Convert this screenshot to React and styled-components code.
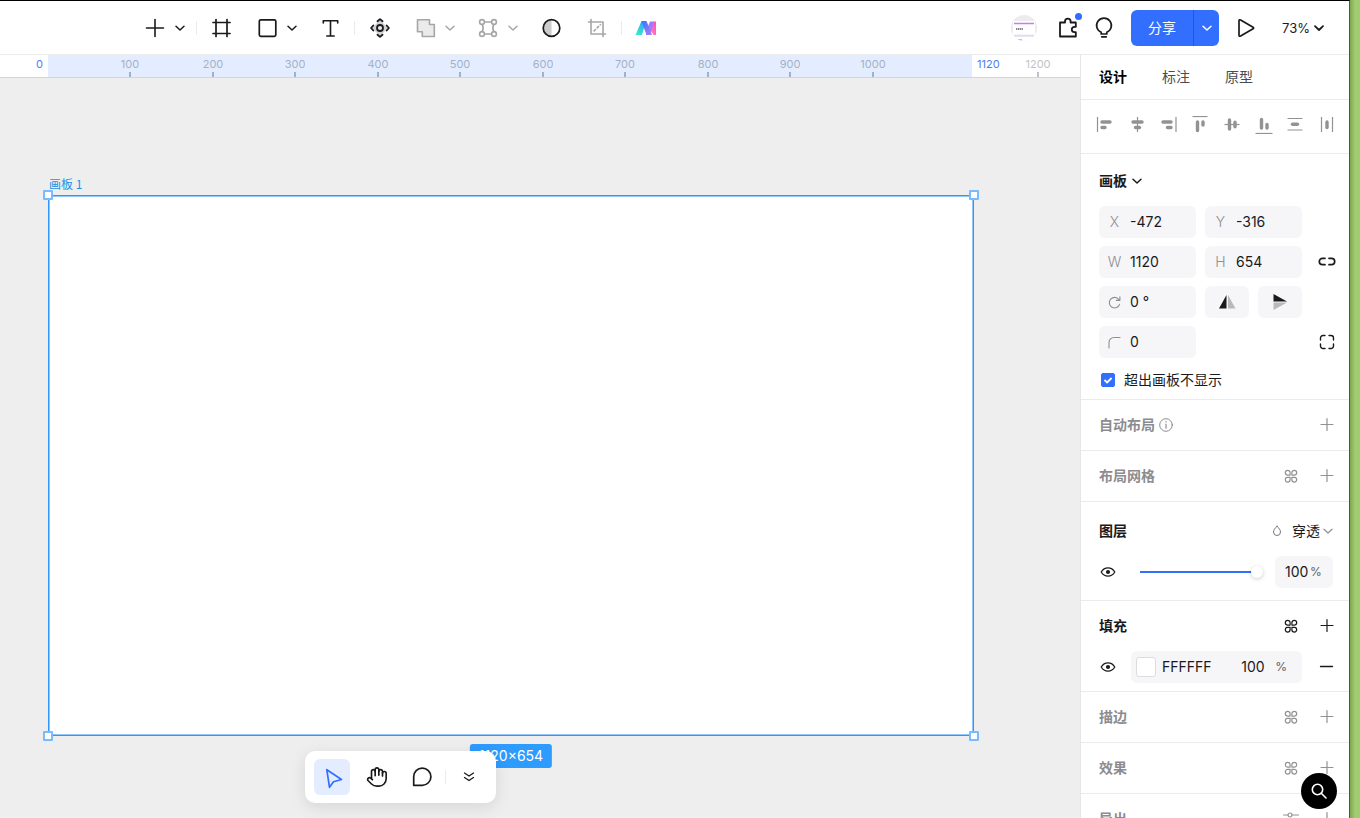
import React, { useState } from 'react';
import styled, { createGlobalStyle } from 'styled-components';
import { Hand } from 'lucide-react';

const GlobalStyle = createGlobalStyle`
  * {
    box-sizing: border-box;
  }
  body {
    margin: 0;
    color: #1a1a1c;
    font: 14px/20px Inter, 'Noto Sans CJK SC', sans-serif;
  }
  button, input, select {
    margin: 0;
    padding: 0;
    border: 0;
    background: none;
    color: inherit;
    font: inherit;
    outline: none;
  }
  svg {
    display: block;
    flex: none;
  }
`;

const Desktop = styled.div`
  display: flex;
  height: 100vh;
  overflow: hidden;
  background: linear-gradient(90deg, #7fa553, #a2cc70 5px, #a2cc70) right / 10px 100% no-repeat;
  padding-right: 10px;
`;

const AppWindow = styled.div`
  position: relative;
  flex: 1;
  min-width: 0;
  display: flex;
  flex-direction: column;
  overflow: hidden;
  background: #fff;
  border-top: 1px solid #000;
  border-right: 1px solid #4d5a3e;
`;

/* 顶部工具栏 */
const Header = styled.header`
  display: flex;
  align-items: center;
  justify-content: space-between;
  height: 54px;
  flex: none;
  padding: 0 24px 0 132px;
  border-bottom: 1px solid #ebebeb;
`;

const Tools = styled.div`
  display: flex;
  align-items: center;
`;

const Tool = styled.button`
  display: flex;
  width: 24px;
  height: 24px;
  margin: 0 11px;
  color: ${(p) => (p.$muted ? '#a6a6a8' : '#1a1a1c')};
`;

const Caret = styled.button`
  display: flex;
  align-items: center;
  justify-content: center;
  width: 16px;
  height: 24px;
  margin: 0 7px 0 -6px;
  color: ${(p) => (p.$muted ? '#a6a6a8' : '#1a1a1c')};
`;

const Divider = styled.span`
  width: 1px;
  height: 14px;
  margin: 0 ${(p) => p.$space || 1}px;
  background: #ebebeb;
`;

const Actions = styled.div`
  display: flex;
  align-items: center;
  gap: ${(p) => p.$gap}px;
`;

const Avatar = styled.span`
  width: 26px;
  height: 26px;
  margin-right: 7px;
  border-radius: 50%;
  overflow: hidden;
`;

const IconButton = styled.button`
  position: relative;
  display: flex;
  align-items: center;
  justify-content: center;
  flex: none;
  width: ${(p) => p.$size || 24}px;
  height: ${(p) => p.$size || 24}px;
  color: ${(p) => (p.$muted ? '#929295' : '#1a1a1c')};
`;

const Dot = styled.i`
  position: absolute;
  top: -3px;
  right: -2px;
  width: 7px;
  height: 7px;
  border-radius: 50%;
  background: #2f6dff;
`;

const ShareGroup = styled.div`
  display: flex;
  height: 36px;
  border-radius: 6px;
  overflow: hidden;
  background: #326fff;
  color: #fff;
  .share {
    width: 63px;
    border-right: 1px solid #1f57e0;
  }
  .more {
    display: flex;
    align-items: center;
    justify-content: center;
    width: 25px;
  }
`;

const ZoomButton = styled.button`
  display: flex;
  align-items: center;
  gap: 3px;
  padding-left: 9px;
  font-size: 13px;
`;

const Body = styled.div`
  flex: 1;
  display: flex;
  min-height: 0;
`;

const Workspace = styled.main`
  flex: 1;
  min-width: 0;
  display: flex;
  flex-direction: column;
`;

/* 标尺 */
const Ruler = styled.div`
  position: relative;
  height: 23px;
  flex: none;
  overflow: hidden;
  border-bottom: 1px solid #d3d5d8;
  font-size: 11px;
  line-height: 18px;
  .range {
    position: absolute;
    top: 0;
    height: 23px;
    background: #e3edff;
  }
`;

const Mark = styled.span`
  position: absolute;
  top: 0;
  width: 40px;
  height: 22px;
  margin-left: -20px;
  text-align: center;
  color: ${(p) => (p.$outside ? '#c2c2c4' : '#a3b1c6')};
  &::after {
    content: '';
    position: absolute;
    left: 19px;
    bottom: 0;
    width: 2px;
    height: 5px;
    background: currentColor;
  }
`;

const Edge = styled.span`
  position: absolute;
  top: 0;
  color: #4d7df5;
  transform: ${(p) => (p.$before ? 'translateX(-100%)' : 'none')};
  padding: 0 5px;
`;

/* 画布 */
const Canvas = styled.div`
  position: relative;
  flex: 1;
  overflow: hidden;
  background: #eee;
`;

const Artboard = styled.div`
  position: absolute;
  background: #fff;
  border: 1px solid #2f97fb;
  box-shadow: inset 0 0 0 1px #8fc7fd;
  .name {
    position: absolute;
    left: 0;
    bottom: calc(100% + 2px);
    font: 12px/20px 'Noto Sans CJK SC', sans-serif;
    color: #1a93e6;
    white-space: nowrap;
  }
`;

const Handle = styled.i`
  position: absolute;
  width: 10px;
  height: 10px;
  background: #fff;
  border: 2px solid #79bbfc;
  border-radius: 1px;
  ${(p) => p.$v}: -6px;
  ${(p) => p.$h}: -6px;
`;

const SizeTag = styled.span`
  position: absolute;
  top: calc(100% + 9px);
  left: 50%;
  transform: translateX(-50%);
  padding: 0 9px;
  border-radius: 3px;
  background: #2e9bff;
  color: #fff;
  line-height: 24px;
`;

const Dock = styled.div`
  position: absolute;
  left: 305px;
  bottom: 15px;
  display: flex;
  align-items: center;
  height: 52px;
  padding: 0 9px;
  border-radius: 10px;
  background: #fff;
  box-shadow: 0 4px 16px rgba(0, 0, 0, 0.1);
`;

const DockGroup = styled.div`
  display: flex;
  gap: 9px;
`;

const DockButton = styled.button`
  display: flex;
  align-items: center;
  justify-content: center;
  width: 36px;
  height: 36px;
  border-radius: 6px;
  background: ${(p) => (p.$active ? '#e3edff' : 'transparent')};
  color: ${(p) => (p.$active ? '#326fff' : '#1a1a1c')};
`;

/* 水印 */
const Watermark = styled.div`
  position: absolute;
  inset: 0;
  overflow: hidden;
  pointer-events: none;
  color: rgba(0, 0, 0, 0.016);
  font: 29px/34px 'Liberation Serif', 'Noto Sans CJK SC', serif;
  text-align: center;
  div {
    position: absolute;
    width: 240px;
    margin: -68px 0 0 -120px;
    transform: rotate(-45deg);
  }
`;

/* 右侧属性面板 */
const Panel = styled.aside`
  width: 269px;
  flex: none;
  overflow: hidden;
  border-left: 1px solid #e6e6e6;
`;

const Tabs = styled.nav`
  display: flex;
  align-items: center;
  gap: 35px;
  height: 45px;
  padding: 0 18px;
  border-bottom: 1px solid #ebebeb;
`;

const Tab = styled.button`
  color: ${(p) => (p.$active ? '#000' : '#4c4c50')};
  font-weight: ${(p) => (p.$active ? 700 : 400)};
`;

const AlignBar = styled.div`
  display: flex;
  align-items: center;
  justify-content: space-between;
  height: 54px;
  padding: 0 13px 3px 15px;
  border-bottom: 1px solid #ebebeb;
`;

const Section = styled.section`
  display: flex;
  flex-direction: column;
  gap: 12px;
  padding: ${(p) => p.$top || 12}px 13px ${(p) => p.$bottom || 12}px 18px;
  border-bottom: 1px solid #ebebeb;
`;

const SectionHead = styled.div`
  display: flex;
  align-items: center;
  gap: 18px;
  height: 26px;
  color: ${(p) => (p.$muted ? '#8c8c90' : '#1a1a1c')};
  h2 {
    display: flex;
    align-items: center;
    gap: 4px;
    flex: 1;
    margin: 0;
    font-size: 14px;
    font-weight: 700;
  }
`;

const Fields = styled.div`
  display: grid;
  grid-template-columns: 1fr 1fr 25px;
  gap: 8px 9px;
  align-items: center;
  .start {
    grid-column: 1;
  }
  .end {
    grid-column: 3;
    justify-self: end;
  }
`;

const Field = styled.label`
  display: flex;
  align-items: center;
  height: 32px;
  padding-left: 8px;
  border-radius: 6px;
  background: #f6f6f8;
  .tag {
    flex: none;
    width: 15px;
    margin-right: 8px;
    color: #8f8f93;
    font-weight: 300;
    text-align: center;
  }
  input {
    width: 100%;
    min-width: 0;
  }
`;

const FlipPair = styled.div`
  display: grid;
  grid-template-columns: 1fr 1fr;
  gap: 9px;
`;

const FlipButton = styled.button`
  display: flex;
  align-items: center;
  justify-content: center;
  height: 32px;
  border-radius: 6px;
  background: #f6f6f8;
`;

const CheckRow = styled.label`
  display: flex;
  align-items: center;
  gap: 9px;
  padding-left: 2px;
  input {
    appearance: none;
    width: 14px;
    height: 14px;
    border-radius: 2px;
    background: #fff;
    border: 1px solid #326fff;
  }
  input:checked {
    background: #326fff url("data:image/svg+xml,%3Csvg xmlns='http://www.w3.org/2000/svg' viewBox='0 0 12 12'%3E%3Cpath d='M2.5 6l2.6 2.5L9.6 4' fill='none' stroke='white' stroke-width='1.8'/%3E%3C/svg%3E");
  }
`;

const BlendSelect = styled.label`
  display: flex;
  align-items: center;
  select {
    appearance: none;
    width: 30px;
    margin-left: 9px;
  }
  .arrow {
    color: #929295;
    margin-right: 2px;
  }
`;

const Row = styled.div`
  display: flex;
  align-items: center;
  height: 32px;
`;

const Opacity = styled.input`
  appearance: none;
  flex: 1;
  min-width: 0;
  height: 12px;
  margin: 0 12px 0 23px;
  background: linear-gradient(#326fff, #326fff) left / calc(100% - 6px) 2px no-repeat;
  &::-webkit-slider-thumb {
    appearance: none;
    width: 12px;
    height: 12px;
    border-radius: 50%;
    background: #fff;
    box-shadow: 0 1px 4px rgba(0, 0, 0, 0.2);
  }
`;

const Percent = styled.label`
  display: flex;
  align-items: center;
  width: 58px;
  height: 32px;
  margin-right: 3px;
  padding-left: 10px;
  border-radius: 6px;
  background: #f6f6f8;
  input {
    width: 25px;
  }
  span {
    color: #5f5f63;
    font-size: 12px;
  }
`;

const FillBox = styled.div`
  flex: 1;
  display: flex;
  align-items: center;
  min-width: 0;
  height: 32px;
  margin: 0 16px 0 14px;
  padding: 0 15px 0 5px;
  border-radius: 6px;
  background: #f6f6f8;
  .swatch {
    width: 20px;
    height: 20px;
    margin-right: 6px;
    border: 1px solid #dcdce0;
    border-radius: 3px;
    background: #fff;
  }
  .hex {
    flex: 1;
    min-width: 0;
  }
  .alpha {
    width: 34px;
  }
  span {
    color: #5f5f63;
    font-size: 12px;
  }
`;

const SearchBubble = styled.button`
  position: fixed;
  right: 23px;
  bottom: 9px;
  display: flex;
  align-items: center;
  justify-content: center;
  width: 36px;
  height: 36px;
  border-radius: 50%;
  background: #000;
  color: #fff;
`;

const Svg = ({ size = 24, stroke = 1.6, children, ...rest }) => (
  <svg
    width={size}
    height={size}
    viewBox={`0 0 ${size} ${size}`}
    fill="none"
    stroke="currentColor"
    strokeWidth={stroke}
    strokeLinecap="round"
    strokeLinejoin="round"
    aria-hidden="true"
    {...rest}
  >
    {children}
  </svg>
);

const Chevron = (props) => (
  <Svg size={12} stroke={1.5} {...props}>
    <path d="M2 4.2l4 3.8 4-3.8" />
  </Svg>
);

const Plus = () => (
  <Svg size={18} stroke={1.2}>
    <path d="M3 8.5h12M9 2.5v12" />
  </Svg>
);

const Minus = () => (
  <Svg size={18} stroke={1.3}>
    <path d="M2.5 8.5h12" />
  </Svg>
);

const Clover = () => (
  <Svg size={18} stroke={1.2}>
    <path d="M8.1 8.1H5.4a2.4 2.4 0 1 1 2.7-2.6zM9.9 8.1V5.5a2.4 2.4 0 1 1 2.7 2.6zM8.1 10.3H5.4a2.4 2.4 0 1 0 2.7 2.6zM9.9 10.3v2.6a2.4 2.4 0 1 0 2.7-2.6z" />
  </Svg>
);

const Eye = () => (
  <Svg size={18} stroke={1.3}>
    <path d="M2.2 9C3.8 6.3 6.2 4.900 9 4.900S14.2 6.3 15.8 9C14.2 11.7 11.8 13.1 9 13.1S3.800 11.7 2.2 9z" />
    <circle cx="9" cy="9" r="2.1" fill="currentColor" stroke="none" />
  </Svg>
);

const Sliders = () => (
  <Svg size={18} stroke={1.2}>
    <path d="M1.5 5h4.5M10 5h6.5M1.5 13h7M13 13h3.5" />
    <circle cx="8" cy="5" r="2" />
    <circle cx="11" cy="13" r="2" />
  </Svg>
);

/* 线段 + 圆头块组成的对齐图标 */
const ALIGN_ICONS = [
  { name: '左对齐', line: 'M1.5 1v15', bars: 'M6 6h8M6 11.5h3' },
  { name: '水平居中', line: 'M9.5 1v15', bars: 'M5 6h9M7.5 11.5h4' },
  { name: '右对齐', line: 'M17 1v15', bars: 'M4 6h8M8.5 11.5h3.5' },
  { name: '顶对齐', line: 'M1.5 .5h15', bars: 'M6.5 6v8.5M12 6v3' },
  { name: '垂直居中', line: 'M1.5 8.5h15', bars: 'M6.5 4v9M12 6.2v4.500' },
  { name: '底对齐', line: 'M.5 17.5h17', bars: 'M6.5 3.5v8.5M12 8.5v3.5' },
  { name: '垂直分布', line: 'M1.5 2.500h15M1.500 14h15', bars: 'M6.500 8.300h5' },
  { name: '水平分布', line: 'M3.5 1v15M14.5 1v15', bars: 'M9 6v5.5' },
];

const SCALE = 0.825;
const board = { x: 48, y: 117, width: 1120, height: 654 };
const marks = [100, 200, 300, 400, 500, 600, 700, 800, 900, 1000];

/* 交错排列的水印坐标 */
const watermarks = [0, 1, 2, 3].flatMap((row) =>
  [0, 1, 2].map((col) => [col * 532 + (row % 2 ? 38 : 303), 48 + row * 266])
);

const TopTools = () => (
  <Tools>
    <Tool aria-label="添加"><Svg><path d="M3.5 12h17M12 3.5v17" /></Svg></Tool>
    <Caret aria-label="更多添加"><Chevron /></Caret>
    <Divider />
    <Tool aria-label="画板">
      <Svg stroke={1.7}><path d="M7 3.5v17M18 3.5v17M4 6.5h17M4 17.5h17" /></Svg>
    </Tool>
    <Tool aria-label="矩形"><Svg stroke={1.7}><rect x="4.300" y="3.800" width="16.500" height="16.500" rx="1.500" /></Svg></Tool>
    <Caret aria-label="更多形状"><Chevron /></Caret>
    <Tool aria-label="文本">
      <Svg><path d="M5.300 7V4.800h14.400V7M12.500 4.800v15.200M8.800 20h7.400" /></Svg>
    </Tool>
    <Divider />
    <Tool aria-label="组件">
      <Svg stroke={1.8}>
        <path d="M13 4l8 8-8 8-8-8z" fill="#d2d2d4" stroke="none" />
        <circle cx="13" cy="12" r="3" fill="#e8e8ea" />
        <path d="M10.500 5.300l2.500-2.200 2.500 2.200M10.500 18.700l2.500 2.200 2.500-2.200M6.300 9.500l-2.200 2.500 2.200 2.500M19.700 9.500l2.200 2.500-2.200 2.500" />
      </Svg>
    </Tool>
    <Tool aria-label="布尔运算" $muted>
      <Svg><path d="M4.500 3.700h12v4.800h4.800v12h-12v-4.800H4.500z" fill="#ebebec" /></Svg>
    </Tool>
    <Caret aria-label="更多运算" $muted><Chevron /></Caret>
    <Tool aria-label="编辑节点" $muted>
      <Svg>
        <path d="M8.500 6h7M8.500 18h7M6.200 8.500c1.300 2.300 1.300 4.700 0 7M17.800 8.500c-1.300 2.300-1.300 4.700 0 7" />
        <circle cx="6" cy="6" r="2.400" />
        <circle cx="18" cy="6" r="2.400" />
        <circle cx="6" cy="18" r="2.400" />
        <circle cx="18" cy="18" r="2.400" />
      </Svg>
    </Tool>
    <Caret aria-label="更多节点" $muted><Chevron /></Caret>
    <Tool aria-label="蒙版">
      <Svg stroke={1.7}>
        <path d="M12.500 3.800a8.200 8.200 0 0 0 0 16.400z" fill="#ccc" stroke="none" />
        <circle cx="12.500" cy="12" r="8.300" />
      </Svg>
    </Tool>
    <Tool aria-label="裁剪" $muted>
      <Svg>
        <path d="M6 3.500V18h14.500M3.500 6H18v14.500" />
        <path d="M9 15l6.500-6.500" strokeDasharray="2 2.500" />
      </Svg>
    </Tool>
    <Divider />
    <Tool aria-label="AI">
      <svg width="24" height="24" viewBox="0 0 24 24" aria-hidden="true">
        <defs>
          <linearGradient id="leg" x1="0" y1="1" x2=".6" y2="0">
            <stop offset="0" stopColor="#36f5c4" />
            <stop offset="1" stopColor="#2ea6f7" />
          </linearGradient>
          <linearGradient id="mid" x1="0" y1="0" x2="1" y2="1">
            <stop offset="0" stopColor="#2b7bf5" />
            <stop offset="1" stopColor="#b37bff" />
          </linearGradient>
          <linearGradient id="tail" x1="0" y1="1" x2="1" y2="0">
            <stop offset="0" stopColor="#ff8ad0" />
            <stop offset="1" stopColor="#ff4fa8" />
          </linearGradient>
        </defs>
        <path d="M22 5.500v13.500h-2.500l-4-6.500 4-7z" fill="url(#tail)" />
        <path d="M7.500 5h4.500L8 19H1.500z" fill="url(#leg)" />
        <path d="M12 15l4-9.500h4L16.500 19H12z" fill="#a47bff" />
        <path d="M7.500 5h5L18 19h-5.500z" fill="url(#mid)" />
      </svg>
    </Tool>
  </Tools>
);

const TopActions = () => (
  <Actions $gap={15}>
    <Actions $gap={12}>
      <Avatar>
        <svg width="26" height="26" viewBox="0 0 26 26" aria-hidden="true">
          <rect width="26" height="26" fill="#ececee" />
          <rect x="2" y="6" width="22" height="15" fill="#fff" />
          <path d="M3 8.500h20" stroke="#cf7ce8" strokeWidth="1.300" />
          <path d="M5 14h7" stroke="#66666a" strokeWidth="1.600" strokeDasharray="1.500 .500" />
          <path d="M3 20.500h20" stroke="#ecd2f5" strokeWidth="1.500" />
          <rect y="22" width="26" height="4" fill="#fff" />
          <path d="M7 25h4" stroke="#8b8b90" />
        </svg>
      </Avatar>
      <IconButton aria-label="插件">
        <Svg stroke={1.8}>
          <path d="M4 6.500h5v-1a2.800 2.800 0 0 1 5.600 0v1h5.200v4.300h-1.300a2.700 2.700 0 0 0 0 5.400h1.300v4.300H4z" />
        </Svg>
        <Dot />
      </IconButton>
      <IconButton aria-label="帮助">
        <Svg stroke={1.7}>
          <path d="M9.200 18v-1.700a7.400 7.400 0 1 1 5.600 0V18zM9.700 20.800h4.600" />
        </Svg>
      </IconButton>
    </Actions>
    <ShareGroup>
      <button className="share">分享</button>
      <button className="more" aria-label="分享选项"><Chevron /></button>
    </ShareGroup>
    <IconButton aria-label="播放">
      <Svg stroke={1.7}><path d="M5 4.800c0-.900.800-1.300 1.600-.900l12.500 7.300c.700.400.700 1.200 0 1.600L6.600 20.100c-.800.400-1.600 0-1.600-.900z" /></Svg>
    </IconButton>
    <ZoomButton>73%<Chevron stroke={1.8} /></ZoomButton>
  </Actions>
);

const DesignPanel = () => {
  const [clip, setClip] = useState(true);
  const [opacity, setOpacity] = useState(100);

  return (
    <Panel>
      <Tabs>
        <Tab $active>设计</Tab>
        <Tab>标注</Tab>
        <Tab>原型</Tab>
      </Tabs>
      <AlignBar>
        {ALIGN_ICONS.map((icon) => (
          <IconButton key={icon.name} aria-label={icon.name} $size={18} $muted>
            <Svg size={18} stroke={1.2}>
              <path d={icon.line} strokeLinecap="butt" />
              <path d={icon.bars} strokeWidth="3.400" />
            </Svg>
          </IconButton>
        ))}
      </AlignBar>
      <Section $top={14} $bottom={9}>
        <SectionHead>
          <h2>画板<Chevron /></h2>
        </SectionHead>
        <Fields>
          <Field className="start"><span className="tag">X</span><input defaultValue="-472" /></Field>
          <Field><span className="tag">Y</span><input defaultValue="-316" /></Field>
          <Field className="start"><span className="tag">W</span><input defaultValue="1120" /></Field>
          <Field><span className="tag">H</span><input defaultValue="654" /></Field>
          <IconButton className="end" $size={18} aria-label="锁定比例">
            <Svg size={18} stroke={1.7}>
              <path d="M7 5.300H4.500a3.200 3.200 0 0 0 0 6.400H7M11 5.300h2.500a3.200 3.200 0 0 1 0 6.400H11" />
            </Svg>
          </IconButton>
          <Field className="start">
            <span className="tag">
              <Svg size={15} stroke={1.1}><path d="M12.700 9.200a5.300 5.300 0 1 1-.800-4.700M12.900 1.800v3.600H9.300" /></Svg>
            </span>
            <input aria-label="旋转" defaultValue="0 °" />
          </Field>
          <FlipPair>
            <FlipButton aria-label="水平翻转">
              <svg width="18" height="18" viewBox="0 0 18 18" aria-hidden="true">
                <path d="M8.500 2v13.500H1z" fill="#1a1a1c" />
                <path d="M10 2v13.500h7.500z" fill="#b9b9bc" />
              </svg>
            </FlipButton>
            <FlipButton aria-label="垂直翻转">
              <svg width="18" height="18" viewBox="0 0 18 18" aria-hidden="true">
                <path d="M2.500 1v7.500H16z" fill="#1a1a1c" />
                <path d="M2.500 17v-7.500H16z" fill="#b9b9bc" />
              </svg>
            </FlipButton>
          </FlipPair>
          <Field className="start">
            <span className="tag">
              <Svg size={15} stroke={1.1}><path d="M2 13V7.500a5 5 0 0 1 5-5h6" /></Svg>
            </span>
            <input aria-label="圆角" defaultValue="0" />
          </Field>
          <IconButton className="end" $size={18} aria-label="独立圆角">
            <Svg size={18} stroke={1.4}>
              <path d="M2.500 7V5a2.500 2.500 0 0 1 2.500-2.500h2M11 2.500h2A2.500 2.500 0 0 1 15.500 5v2M15.500 11v2a2.500 2.500 0 0 1-2.500 2.500h-2M7 15.500H5A2.500 2.500 0 0 1 2.500 13v-2" />
            </Svg>
          </IconButton>
        </Fields>
        <CheckRow>
          <input type="checkbox" checked={clip} onChange={(e) => setClip(e.target.checked)} />
          超出画板不显示
        </CheckRow>
      </Section>
      <Section>
        <SectionHead $muted>
          <h2>
            自动布局
            <Svg size={14} stroke={1}><circle cx="7" cy="7" r="6.300" /><path d="M7 6.200v4M7 3.700v.300" strokeWidth="1.200" /></Svg>
          </h2>
          <IconButton $size={18} $muted aria-label="添加自动布局"><Plus /></IconButton>
        </SectionHead>
      </Section>
      <Section>
        <SectionHead $muted>
          <h2>布局网格</h2>
          <IconButton $size={18} $muted aria-label="网格样式"><Clover /></IconButton>
          <IconButton $size={18} $muted aria-label="添加布局网格"><Plus /></IconButton>
        </SectionHead>
      </Section>
      <Section $top={16}>
        <SectionHead>
          <h2>图层</h2>
          <BlendSelect>
            <Svg size={12} stroke={1} color="#77777b"><path d="M6 1.200c2.200 2.300 3.500 3.900 3.500 5.800a3.500 3.500 0 0 1-7 0c0-1.900 1.300-3.500 3.500-5.800z" /></Svg>
            <select aria-label="混合模式" defaultValue="穿透">
              <option>穿透</option>
            </select>
            <Chevron className="arrow" stroke={1.2} />
          </BlendSelect>
        </SectionHead>
        <Row>
          <IconButton $size={18} aria-label="显示图层"><Eye /></IconButton>
          <Opacity type="range" aria-label="不透明度" value={opacity} onChange={(e) => setOpacity(e.target.value)} />
          <Percent>
            <input aria-label="不透明度数值" value={opacity} onChange={(e) => setOpacity(e.target.value)} />
            <span>%</span>
          </Percent>
        </Row>
      </Section>
      <Section $bottom={8}>
        <SectionHead>
          <h2>填充</h2>
          <IconButton $size={18} aria-label="填充样式"><Clover /></IconButton>
          <IconButton $size={18} aria-label="添加填充"><Plus /></IconButton>
        </SectionHead>
        <Row>
          <IconButton $size={18} aria-label="显示填充"><Eye /></IconButton>
          <FillBox>
            <button className="swatch" aria-label="填充颜色" />
            <input className="hex" aria-label="色值" defaultValue="FFFFFF" />
            <input className="alpha" aria-label="填充不透明度" defaultValue="100" />
            <span>%</span>
          </FillBox>
          <IconButton $size={18} aria-label="移除填充"><Minus /></IconButton>
        </Row>
      </Section>
      <Section>
        <SectionHead $muted>
          <h2>描边</h2>
          <IconButton $size={18} $muted aria-label="描边样式"><Clover /></IconButton>
          <IconButton $size={18} $muted aria-label="添加描边"><Plus /></IconButton>
        </SectionHead>
      </Section>
      <Section>
        <SectionHead $muted>
          <h2>效果</h2>
          <IconButton $size={18} $muted aria-label="效果样式"><Clover /></IconButton>
          <IconButton $size={18} $muted aria-label="添加效果"><Plus /></IconButton>
        </SectionHead>
      </Section>
      <Section>
        <SectionHead $muted>
          <h2>导出</h2>
          <IconButton $size={18} $muted aria-label="导出设置"><Sliders /></IconButton>
          <IconButton $size={18} $muted aria-label="添加导出"><Plus /></IconButton>
        </SectionHead>
      </Section>
    </Panel>
  );
};

const App = () => (
  <>
    <GlobalStyle />
    <Desktop>
      <AppWindow>
        <Header>
          <TopTools />
          <TopActions />
        </Header>
        <Body>
          <Workspace>
            <Ruler>
              <div className="range" style={{ left: board.x, width: board.width * SCALE }} />
              <Edge $before style={{ left: board.x }}>0</Edge>
              {marks.map((n) => (
                <Mark key={n} style={{ left: board.x + Math.floor(n * SCALE) }}>{n}</Mark>
              ))}
              <Edge style={{ left: board.x + board.width * SCALE }}>{board.width}</Edge>
              <Mark $outside style={{ left: board.x + 1200 * SCALE }}>1200</Mark>
            </Ruler>
            <Canvas>
              <Artboard
                style={{
                  left: board.x,
                  top: board.y,
                  width: Math.round(board.width * SCALE) + 2,
                  height: Math.round(board.height * SCALE) + 1,
                }}
              >
                <span className="name">画板 1</span>
                <Handle $v="top" $h="left" />
                <Handle $v="top" $h="right" />
                <Handle $v="bottom" $h="left" />
                <Handle $v="bottom" $h="right" />
                <SizeTag>{board.width}×{board.height}</SizeTag>
              </Artboard>
              <Dock>
                <DockGroup>
                  <DockButton $active aria-label="选择">
                    <Svg stroke={1.7}><path d="M6.800 4.700l14.700 9.800-8 2.200-4 5.600z" /></Svg>
                  </DockButton>
                  <DockButton aria-label="抓手"><Hand size={22} strokeWidth={1.8} /></DockButton>
                  <DockButton aria-label="评论">
                    <Svg stroke={1.7}><path d="M3.700 20.300V11.800a8.600 8.600 0 1 1 8.600 8.500z" /></Svg>
                  </DockButton>
                </DockGroup>
                <Divider $space={5} />
                <DockButton aria-label="更多">
                  <Svg size={14} stroke={1.3}><path d="M2.500 3l4.500 3 4.500-3M2.500 7.500l4.500 3 4.500-3" /></Svg>
                </DockButton>
              </Dock>
            </Canvas>
          </Workspace>
          <DesignPanel />
        </Body>
        <Watermark aria-hidden="true">
          {watermarks.map(([x, y]) => (
            <div key={`${x}-${y}`} style={{ left: x, top: y }}>
              linfy<br />10.10.23.22<br />博思<br />2025/04/02 16:57
            </div>
          ))}
        </Watermark>
      </AppWindow>
    </Desktop>
    <SearchBubble aria-label="搜索">
      <Svg size={18}><circle cx="7.500" cy="7.500" r="5.200" /><path d="M11.500 11.500l4.500 4.500" /></Svg>
    </SearchBubble>
  </>
);

export default App;
